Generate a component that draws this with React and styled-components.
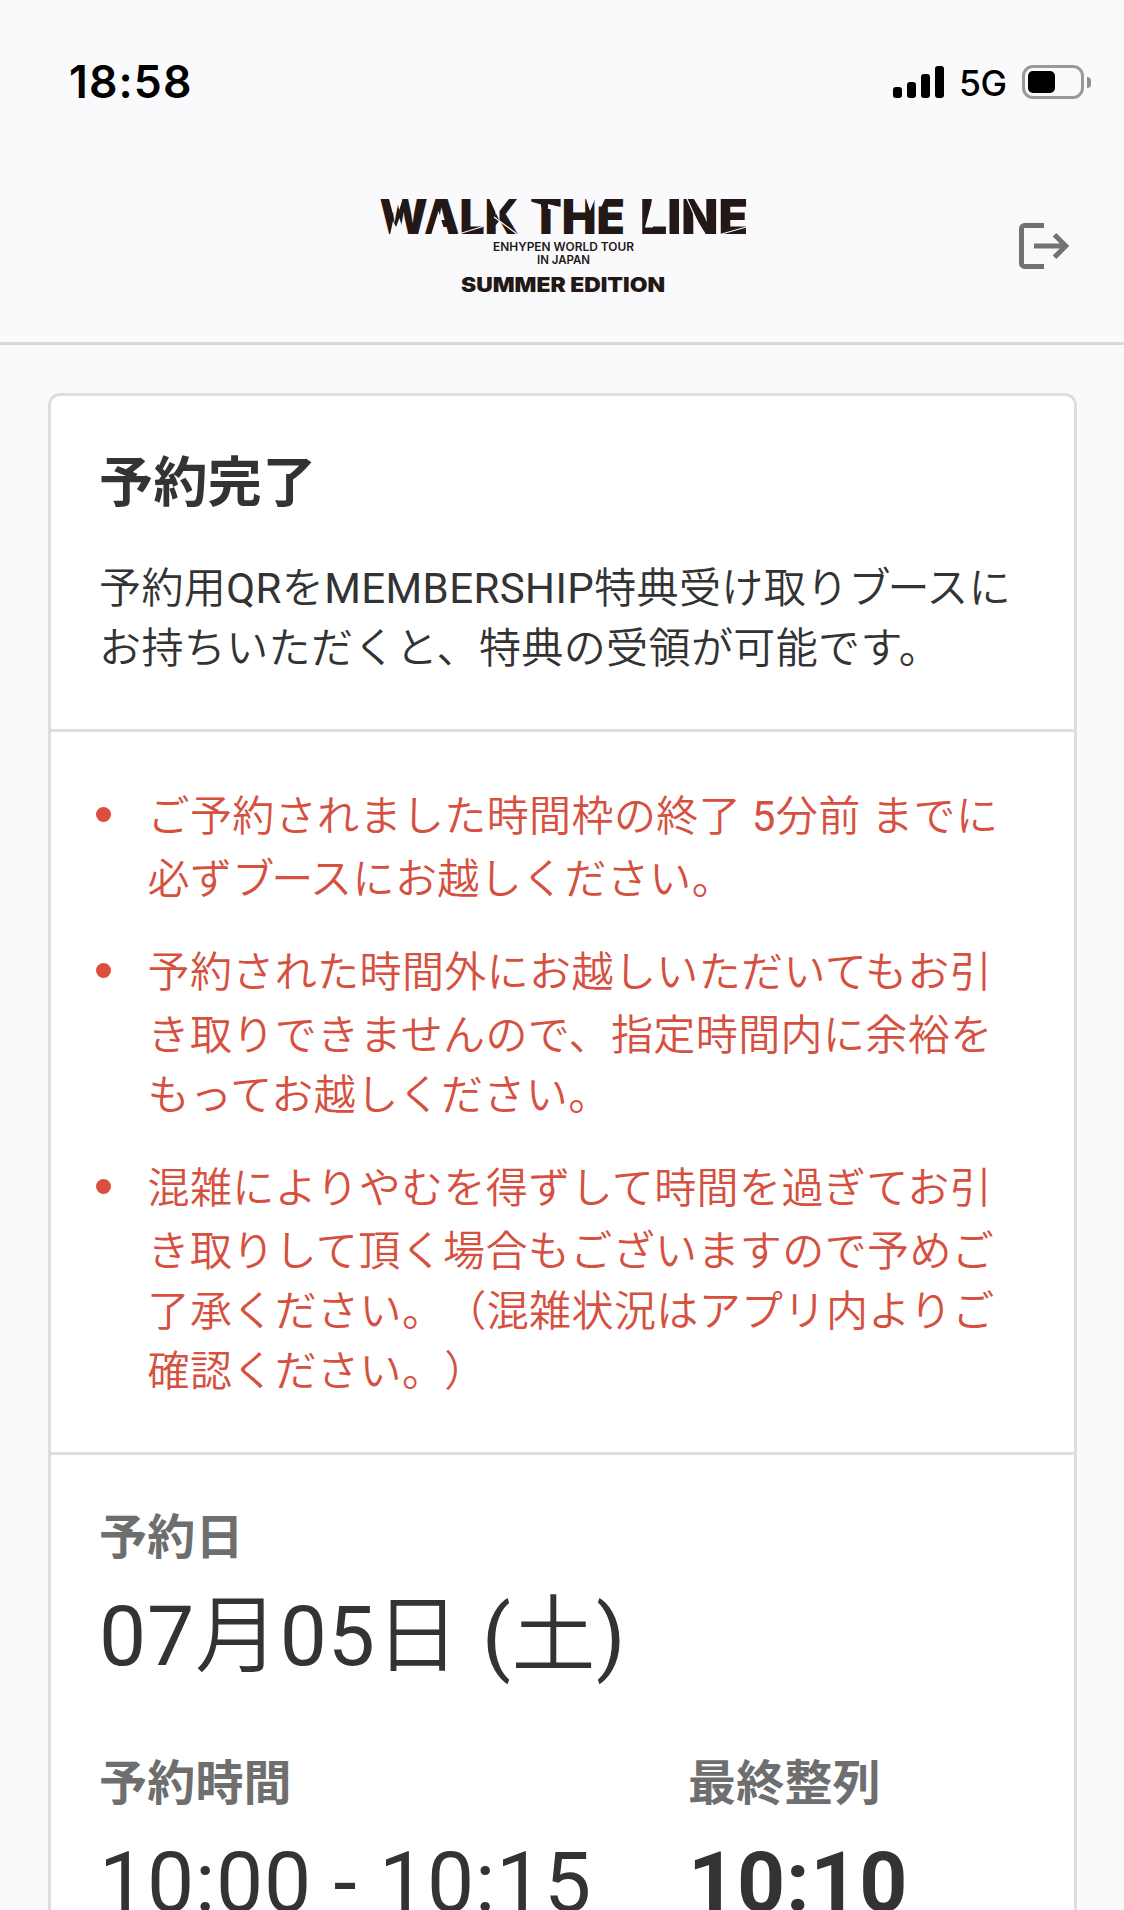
import React from "react";
import styled, { createGlobalStyle } from "styled-components";

const NOTICES = [
  ["ご予約されました時間枠の終了 5分前 までに", "必ずブースにお越しください。"],
  [
    "予約された時間外にお越しいただいてもお引",
    "き取りできませんので、指定時間内に余裕を",
    "もってお越しください。",
  ],
  [
    "混雑によりやむを得ずして時間を過ぎてお引",
    "き取りして頂く場合もございますので予めご",
    "了承ください。（混雑状況はアプリ内よりご",
    "確認ください。）",
  ],
];

const SIGNAL_BARS = [11, 16, 24, 32];

// Latin runs keep the regular weight, the long vowel mark is set tighter
const MixedText = ({ children }) =>
  children.split(/([0-9A-Z]+|ー)/).map((part, i) => {
    if (i % 2 === 0) return part;
    return part === "ー" ? <LongVowel key={i}>{part}</LongVowel> : <Latin key={i}>{part}</Latin>;
  });

const TourLogo = () => (
  <Logo viewBox="0 0 400 130" role="img" aria-label="WALK THE LINE">
    <g fill="#231815" fontFamily="Inter, sans-serif">
      <g fontSize="47.8" fontWeight="900">
        <text x="19.5" y="54.3" textLength="139" lengthAdjust="spacingAndGlyphs">WALK</text>
        <text x="170" y="54.3" textLength="95" lengthAdjust="spacingAndGlyphs">THE</text>
        <text x="280" y="54.3" textLength="108" lengthAdjust="spacingAndGlyphs">LINE</text>
      </g>
      <g fontSize="11.5" fontWeight="600">
        <text x="133" y="71" textLength="141" lengthAdjust="spacingAndGlyphs">ENHYPEN WORLD TOUR</text>
        <text x="177" y="83.5" textLength="53" lengthAdjust="spacingAndGlyphs">IN JAPAN</text>
      </g>
      <text x="101" y="112.3" fontSize="20.3" fontWeight="900" textLength="204" lengthAdjust="spacingAndGlyphs">
        SUMMER EDITION
      </text>
    </g>
    {/* diagonal cuts through the letters */}
    <g fill="#fafafc">
      <path d="M30 55 33 41 36 47 39.5 38 44 55z" />
      <path d="M29 19 32.7 33 37.3 22.7 39.3 30 42.3 20V19z" />
      <path d="M78.5 31 86 55H71z" />
      <path d="M129.5 19 139.5 41V31L149 19z" />
      <path d="M169 21 181 24.5V28H169z" />
      <path d="M188 24 200 27V29H188z" />
      <path d="M226 19h9l-5 12z" />
      <path d="M236 19h9l-3.500 7.500H236z" />
      <path d="M292.500 19 285 47.500h8V19z" />
    </g>
    <g stroke="#fafafc" strokeWidth="1.2">
      <path d="M97 54.5 123 46.5M134 37 157 54M327 19 343 54M360 54.500 388 46.500" />
    </g>
  </Logo>
);

const App = () => {
  return (
    <Page>
      <GlobalStyle />
      <StatusBar>
        <Clock>18:58</Clock>
        <Indicators>
          <Signal>
            {SIGNAL_BARS.map((height) => (
              <SignalBar key={height} $height={height} />
            ))}
          </Signal>
          <Network>5G</Network>
          <Battery>
            <BatteryBody>
              <BatteryLevel />
            </BatteryBody>
            <BatteryCap />
          </Battery>
        </Indicators>
      </StatusBar>

      <Header>
        <TourLogo />
        <LogoutButton aria-label="ログアウト">
          <svg width="52" height="48" viewBox="0 0 52 48" fill="none" stroke="#727272">
            <path d="M26 3.6H6.5a3 3 0 0 0-3 3v34.8a3 3 0 0 0 3 3H26" strokeWidth="5" />
            <path d="M16 24h32M36.5 12.7 47.7 24 36.5 35.3" strokeWidth="5" />
          </svg>
        </LogoutButton>
      </Header>

      <Card>
        <Intro>
          <Title>予約完了</Title>
          <Text>
            <MixedText>予約用QRをMEMBERSHIP特典受け取りブースに</MixedText>
            <br />
            お持ちいただくと、特典の受領が可能です。
          </Text>
        </Intro>

        <NoticeList>
          {NOTICES.map((lines) => (
            <Notice key={lines[0]}>
              {lines.map((line) => (
                <NoticeLine key={line}>
                  <MixedText>{line}</MixedText>
                </NoticeLine>
              ))}
            </Notice>
          ))}
        </NoticeList>

        <Details>
          <Field>
            <Label>予約日</Label>
            <Value>
              <Latin>07</Latin>月<Latin>05</Latin>日<Latin> (</Latin>土<Latin>)</Latin>
            </Value>
          </Field>
          <FieldRow>
            <Field>
              <Label>予約時間</Label>
              <Value>
                <Latin>10:00 - 10:15</Latin>
              </Value>
            </Field>
            <Field>
              <Label>最終整列</Label>
              <Value $bold>10:10</Value>
            </Field>
          </FieldRow>
        </Details>
      </Card>
    </Page>
  );
};

const GlobalStyle = createGlobalStyle`
  * {
    box-sizing: border-box;
  }
  body {
    margin: 0;
    background: #fafafc;
  }
`;

const Page = styled.div`
  width: 1125px;
  height: 1910px;
  overflow: hidden;
  background: #fafafc;
  color: #333;
  font-family: Roboto, "Noto Sans CJK JP", sans-serif;
  letter-spacing: 0.4px;
  text-spacing-trim: space-all;
`;

const StatusBar = styled.div`
  display: flex;
  align-items: center;
  justify-content: space-between;
  height: 132px;
  padding: 32px 34px 0 69px;
  color: #000;
  font-family: Inter, sans-serif;
`;

const Clock = styled.div`
  font-size: 44.5px;
  font-weight: 600;
  letter-spacing: 1.1px;
`;

const Indicators = styled.div`
  display: flex;
  align-items: center;
`;

const Signal = styled.div`
  display: flex;
  align-items: flex-end;
  gap: 5px;
  height: 32px;
`;

const SignalBar = styled.span`
  width: 9px;
  height: ${({ $height }) => $height}px;
  border-radius: 3px;
  background: #000;
`;

const Network = styled.div`
  width: 78px;
  padding: 2px 0 0 15px;
  font-size: 35.5px;
  font-weight: 500;
  letter-spacing: -0.5px;
`;

const Battery = styled.div`
  display: flex;
  align-items: center;
  gap: 3px;
`;

const BatteryBody = styled.div`
  width: 62px;
  height: 34px;
  padding: 3px;
  border: 3px solid #999;
  border-radius: 11px;
`;

const BatteryLevel = styled.div`
  width: 27px;
  height: 22px;
  border-radius: 5px;
  background: #000;
`;

const BatteryCap = styled.div`
  width: 4px;
  height: 11px;
  border-radius: 0 4px 4px 0;
  background: #8f8f90;
`;

const Header = styled.header`
  display: grid;
  grid-template-columns: 360px 400px 1fr;
  height: 213px;
  border-bottom: 3px solid #d9d9db;
`;

const Logo = styled.svg`
  grid-column: 2;
  width: 400px;
  height: 130px;
  margin-top: 48px;
  letter-spacing: 0;
`;

const LogoutButton = styled.button`
  justify-self: end;
  align-self: start;
  margin: 90px 55px 0 0;
  padding: 0;
  border: 0;
  background: none;

  svg {
    display: block;
  }
`;

const Card = styled.main`
  margin: 48px 48px 0;
  border: 3px solid #dedede;
  border-radius: 12px;
  background: #fff;
`;

const Intro = styled.section`
  height: 336px;
  padding: 49px 48px 0;
  border-bottom: 3px solid #dedede;
`;

const Title = styled.h1`
  margin: 0 0 36px;
  font-size: 54px;
  font-weight: 700;
  line-height: 78px;
`;

const Text = styled.p`
  margin: 0;
  font-size: 42px;
  font-weight: 350;
  line-height: 60px;
  white-space: nowrap;
`;

const Latin = styled.span`
  font-weight: 400;
  white-space: pre;
`;

const LongVowel = styled.span`
  margin: 0 -3.5px;
`;

const NoticeList = styled.ul`
  display: flex;
  flex-direction: column;
  gap: 33px;
  height: 723px;
  margin: 0;
  padding: 55px 45px 0;
  border-bottom: 3px solid #dedede;
  color: #d5503e;
  list-style: none;
`;

const Notice = styled.li`
  display: grid;
  grid-template-columns: 51.5px 1fr;
  font-size: 42px;
  font-weight: 350;
  line-height: 60px;
  white-space: nowrap;

  &::before {
    content: "";
    width: 15px;
    height: 15px;
    margin-top: 20px;
    border-radius: 50%;
    background: #dd4f3d;
  }
`;

const NoticeLine = styled.span`
  grid-column: 2;

  &:first-child {
    height: 63px;
  }
`;

const Details = styled.section`
  padding: 47px 48px 0;
`;

const Field = styled.div`
  height: 246px;
`;

const FieldRow = styled.div`
  display: grid;
  grid-template-columns: 589px 1fr;
`;

const Label = styled.div`
  color: #6e6e6e;
  font-size: 48px;
  font-weight: 700;
  line-height: 71px;
  letter-spacing: 0.2px;
`;

const Value = styled.div`
  font-size: 84px;
  font-weight: ${({ $bold }) => ($bold ? 700 : 350)};
  line-height: 128px;
  letter-spacing: 0.75px;
  white-space: nowrap;
`;

export default App;
